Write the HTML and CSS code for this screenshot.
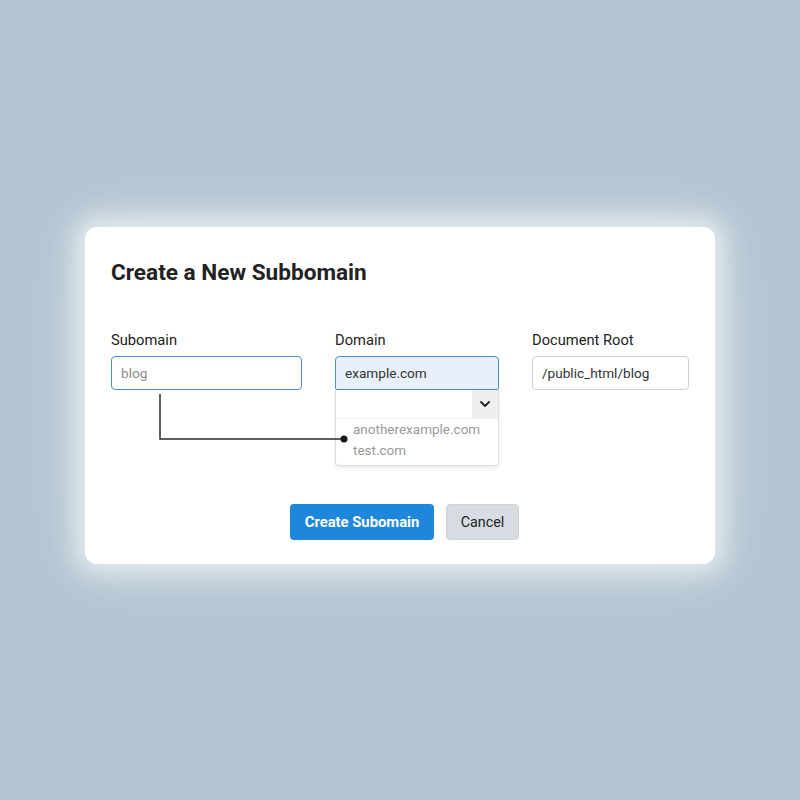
FILE: index.html
```html
<!DOCTYPE html>
<html lang="en">
<head>
    <meta charset="UTF-8">
    <meta name="viewport" content="width=device-width, initial-scale=1.0">
    <title>Create a New Subdomain</title>
    <link rel="stylesheet" href="styles.css">
</head>
<body>
    <div class="card">
        <h1 class="title">Create a New Subbomain</h1>

        <div class="fields">
            <!-- Subdomain -->
            <div class="field field-sub">
                <label class="label" for="sub">Subomain</label>
                <input id="sub" class="input input-active" placeholder="blog">
            </div>

            <!-- Domain with open dropdown -->
            <div class="field field-domain">
                <label class="label">Domain</label>
                <div class="input input-active input-selected">example.com</div>
                <div class="dropdown">
                    <div class="dropdown-head">
                        <span class="chevron">
                            <svg width="10" height="6" viewBox="0 0 10 6"><path d="M1 1l4 4 4-4" fill="none" stroke="#222" stroke-width="1.8" stroke-linecap="round" stroke-linejoin="round"/></svg>
                        </span>
                    </div>
                    <ul class="options">
                        <li>anotherexample.com</li>
                        <li>test.com</li>
                    </ul>
                </div>
            </div>

            <!-- Document root -->
            <div class="field field-root">
                <label class="label" for="root">Document Root</label>
                <input id="root" class="input" value="/public_html/blog">
            </div>
        </div>

        <div class="actions">
            <button class="btn btn-primary">Create Subomain</button>
            <button class="btn btn-cancel">Cancel</button>
        </div>

        <!-- connector between subdomain field and dropdown -->
        <svg class="connector" width="270" height="60" viewBox="0 0 270 60">
            <path d="M75 1V46H259" fill="none" stroke="#2b2b2b" stroke-width="1.5"/>
            <circle cx="259" cy="46" r="3.5" fill="#1a1a1a"/>
        </svg>
    </div>
</body>
</html>
```

FILE: styles.css
```css
body {
    font-family: Roboto, "Noto Sans", Arial, sans-serif;
    margin: 0;
    padding: 0;
    height: 800px;
    display: flex;
    justify-content: center;
    align-items: center;
    background-color: #b2c4d1;
    color: #222;
}

.card {
    position: relative;
    width: 630px;
    box-sizing: border-box;
    padding: 32px 26px 24px;
    margin-top: -10px;
    background-color: #fff;
    border-radius: 12px;
    box-shadow: 0 0 24px 10px rgba(255, 255, 255, 0.6), 0 0 70px 24px rgba(255, 255, 255, 0.2);
}

.title {
    margin: 0;
    font-size: 22.6px;
    line-height: 28px;
    font-weight: 700;
    color: #222;
}

.fields {
    display: flex;
    gap: 33px;
    margin-top: 44px;
}

.field {
    display: flex;
    flex-direction: column;
}

.field-sub { width: 191px; }
.field-domain { width: 164px; }
.field-root { width: 157px; }

.label {
    font-size: 14.7px;
    line-height: 18px;
    color: #222;
    margin-bottom: 7px;
}

.input {
    box-sizing: border-box;
    height: 34px;
    width: 100%;
    padding: 0 9px;
    font-family: inherit;
    font-size: 13.6px;
    line-height: 32px;
    color: #333;
    background: #fff;
    border: 1px solid #cfcfcf;
    border-radius: 4px;
    outline: none;
}

.input::placeholder {
    color: #8c8c8c;
}

.input-active {
    border: 1.5px solid #4a90d0;
}

.input-selected {
    background-color: #e8f1fb;
    border-radius: 4px 4px 2px 2px;
}

.dropdown {
    border: 1px solid #dedede;
    border-top: none;
    border-radius: 0 0 4px 4px;
    box-shadow: 0 2px 5px rgba(0, 0, 0, 0.08);
    background: #fff;
}

.dropdown-head {
    height: 28px;
    display: flex;
    justify-content: flex-end;
    border-bottom: 1px solid #f0f0f0;
}

.chevron {
    width: 26px;
    display: flex;
    align-items: center;
    justify-content: center;
    background-color: #efefef;
}

.options {
    list-style: none;
    margin: 0;
    padding: 0 0 4px 17px;
    font-size: 13.5px;
    line-height: 21px;
    color: #9a9a9a;
}

.actions {
    display: flex;
    justify-content: center;
    gap: 12px;
    margin-top: 38px;
    padding-left: 9px;
}

.btn {
    height: 36px;
    border-radius: 4px;
    font-family: inherit;
    font-size: 14.3px;
    cursor: pointer;
}

.btn-primary {
    width: 144px;
    background-color: #1f87db;
    color: #fff;
    font-size: 14.8px;
    font-weight: 700;
    border: none;
}

.btn-cancel {
    width: 73px;
    background-color: #d6dce1;
    color: #222;
    border: 1px solid #cdd3d8;
}

.connector {
    position: absolute;
    top: 166px;
    left: 0;
}
```
